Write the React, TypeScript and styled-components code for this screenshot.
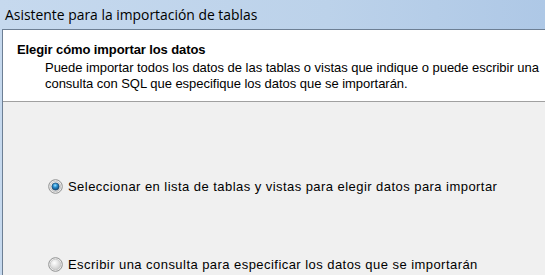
import React from "react";
import styled, { createGlobalStyle } from "styled-components";

const Global = createGlobalStyle`
  html, body { margin: 0; padding: 0; background: #f0f0f0; }
  body { width: 545px; height: 275px; overflow: hidden; }
`;

const Window = styled.div`
  width: 545px;
  height: 275px;
  display: flex;
  flex-direction: column;
  overflow: hidden;
  background: linear-gradient(90deg, #c6d9ee 0%, #bcd2ea 60%, #aec8e6 100%);
`;

const TitleBar = styled.div`
  height: 29px;
  flex: none;
  display: flex;
  align-items: center;
  padding-left: 5px;
  box-sizing: border-box;
  font-family: "Open Sans", "Liberation Sans", sans-serif;
  font-size: 13.9px;
  color: #000;
  padding-bottom: 1px;
`;

const Frame = styled.div`
  flex: 1;
  display: flex;
  flex-direction: column;
  margin-left: 2px;
  border-left: 1px solid #6d7f94;
  border-top: 1px solid #6d7f94;
  background: #f0f0f0;
  min-height: 0;
`;

const Header = styled.div`
  height: 72px;
  flex: none;
  background: #ffffff;
  border-bottom: 1px solid #a0a0a0;
  box-sizing: border-box;
  padding: 12px 0 0 14px;
  font-family: "Liberation Sans", Arial, sans-serif;
  color: #000;
`;

const HeaderTitle = styled.div`
  font-weight: bold;
  font-size: 13px;
  line-height: 16px;
  letter-spacing: -0.1px;
`;

const HeaderText = styled.div`
  font-size: 13px;
  line-height: 16px;
  letter-spacing: -0.03px;
  margin-left: 28px;
  margin-top: 2px;
  white-space: nowrap;
`;

const Body = styled.div`
  flex: 1;
  display: flex;
  flex-direction: column;
  padding: 76px 0 0 45px;
  gap: 62px;
`;

const Option = styled.label`
  display: flex;
  align-items: center;
  gap: 5px;
  font-family: "Liberation Sans", Arial, sans-serif;
  font-size: 13px;
  letter-spacing: 0.45px;
  color: #000;
  height: 16px;
  white-space: nowrap;
`;

const RadioIcon = ({ checked }: { checked: boolean }) => (
  <svg width="15" height="15" viewBox="0 0 15 15">
    <defs>
      <radialGradient id={`rg${checked ? 1 : 0}`} cx="0.4" cy="0.35" r="0.7">
        <stop offset="0" stopColor="#ffffff" />
        <stop offset="1" stopColor="#c8c8c8" />
      </radialGradient>
      <radialGradient id="dot" cx="0.45" cy="0.35" r="0.7">
        <stop offset="0" stopColor="#9be2ff" />
        <stop offset="0.4" stopColor="#2a8fd0" />
        <stop offset="1" stopColor="#0b3f6d" />
      </radialGradient>
    </defs>
    <circle cx="7.5" cy="7.5" r="6.8" fill="#f4f4f4" stroke="#8e8f8f" strokeWidth="1" />
    <circle cx="7.5" cy="7.5" r="5.3" fill={`url(#rg${checked ? 1 : 0})`} stroke="#c2c2c2" strokeWidth="0.8" />
    {checked && <circle cx="7.5" cy="7.5" r="3.6" fill="url(#dot)" stroke="#1a3f63" strokeWidth="0.6" />}
  </svg>
);

export default function App() {
  return (
    <>
      <Global />
      <Window>
        <TitleBar>Asistente para la importación de tablas</TitleBar>
        <Frame>
          <Header>
            <HeaderTitle>Elegir cómo importar los datos</HeaderTitle>
            <HeaderText>
              Puede importar todos los datos de las tablas o vistas que indique o puede escribir una
              <br />
              consulta con SQL que especifique los datos que se importarán.
            </HeaderText>
          </Header>
          <Body>
            <Option>
              <RadioIcon checked />
              Seleccionar en lista de tablas y vistas para elegir datos para importar
            </Option>
            <Option>
              <RadioIcon checked={false} />
              Escribir una consulta para especificar los datos que se importarán
            </Option>
          </Body>
        </Frame>
      </Window>
    </>
  );
}
